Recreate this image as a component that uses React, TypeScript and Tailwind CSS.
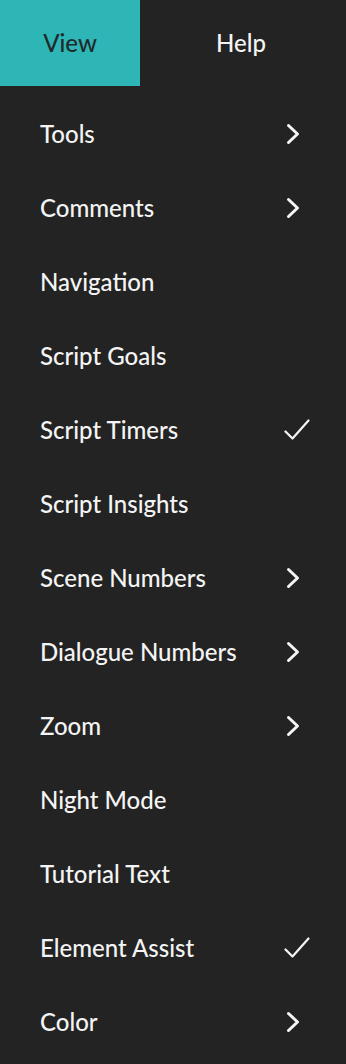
import React from 'react';

type Item = { label: string; kind?: 'sub' | 'check' };

const items: Item[] = [
  { label: 'Tools', kind: 'sub' },
  { label: 'Comments', kind: 'sub' },
  { label: 'Navigation' },
  { label: 'Script Goals' },
  { label: 'Script Timers', kind: 'check' },
  { label: 'Script Insights' },
  { label: 'Scene Numbers', kind: 'sub' },
  { label: 'Dialogue Numbers', kind: 'sub' },
  { label: 'Zoom', kind: 'sub' },
  { label: 'Night Mode' },
  { label: 'Tutorial Text' },
  { label: 'Element Assist', kind: 'check' },
  { label: 'Color', kind: 'sub' },
];

const Chevron = () => (
  <svg width="14" height="22" viewBox="0 0 14 22" fill="none" className="block">
    <path d="M2.5 2.5L11.5 11L2.5 19.5" stroke="#f5f5f5" strokeWidth="3" strokeLinecap="round" strokeLinejoin="round" />
  </svg>
);

const Check = () => (
  <svg width="26" height="22" viewBox="0 0 26 22" fill="none" className="block">
    <path d="M1.5 12.5L8.5 19.5L24.5 1.5" stroke="#f5f5f5" strokeWidth="2.2" strokeLinecap="round" strokeLinejoin="round" />
  </svg>
);

export default function App() {
  return (
    <div
      className="w-[346px] h-[1064px] bg-[#232323] text-[#f4f4f4] overflow-hidden"
      style={{ fontFamily: 'Lato, "Noto Sans", sans-serif' }}
    >
      <div className="flex h-[86px] text-[24px] font-medium">
        <div className="w-[140px] bg-[#2eb5b6] text-[#1f2a2b] flex items-center justify-center">View</div>
        <div className="flex-1 flex items-center justify-center pr-[4px]">Help</div>
      </div>
      <div className="pt-[11px]">
        {items.map((it) => (
          <div key={it.label} className="h-[74px] flex items-center justify-between pl-[40px] pr-[36px] text-[24px] font-medium">
            <span>{it.label}</span>
            {it.kind === 'sub' && (
              <span className="w-[26px] flex justify-start pl-[2px]">
                <Chevron />
              </span>
            )}
            {it.kind === 'check' && (
              <span className="w-[26px] flex">
                <Check />
              </span>
            )}
          </div>
        ))}
      </div>
    </div>
  );
}
